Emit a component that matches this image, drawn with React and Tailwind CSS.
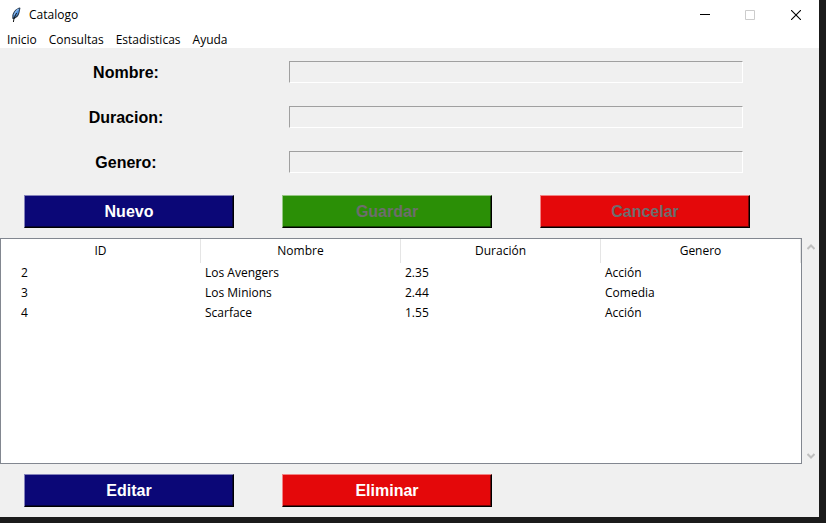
import React from "react";

const menus = ["Inicio", "Consultas", "Estadisticas", "Ayuda"];

const fields = [
  { id: "nombre", label: "Nombre:" },
  { id: "duracion", label: "Duracion:" },
  { id: "genero", label: "Genero:" },
];

const columns = ["ID", "Nombre", "Duración", "Genero"];

const movies = [
  { id: 2, nombre: "Los Avengers", duracion: "2.35", genero: "Acción" },
  { id: 3, nombre: "Los Minions", duracion: "2.44", genero: "Comedia" },
  { id: 4, nombre: "Scarface", duracion: "1.55", genero: "Acción" },
];

const buttonColors = {
  blue: "bg-[#0b0777] border-t-[#8583bb] border-l-[#8583bb] shadow-[inset_-1px_-1px_0_#06043c]",
  green: "bg-[#2b8f06] border-t-[#95c782] border-l-[#95c782] shadow-[inset_-1px_-1px_0_#154703]",
  red: "bg-[#e4080a] border-t-[#f28485] border-l-[#f28485] shadow-[inset_-1px_-1px_0_#720405]",
};

const FeatherIcon = () => (
  <svg className="h-4 w-4" viewBox="0 0 16 16" aria-hidden="true">
    <path d="M12 0.4 C8.6 1 5.2 4.2 4.4 8 L4.2 11.4 L5.6 12.2 C8.8 11 10.8 8.8 11.4 6 L12.4 1.2 Z" fill="#2a3a4c" />
    <path d="M11.4 1.4 C8.6 2.4 6 5.2 5.4 8.2 L5.4 10.6 C8.2 9.8 10 7.6 10.6 5.2 Z" fill="#4f8fd8" />
    <path d="M10.6 2 C8.6 3.2 7 5.4 6.2 8" fill="none" stroke="#8fbcf0" strokeWidth="1.2" />
    <path d="M8.6 6 C7.2 8.4 5.8 11 5.4 15" fill="none" stroke="#111" strokeWidth="1" />
  </svg>
);

const TitleBar = () => (
  <header className="flex h-[30px] items-center bg-white pl-2">
    <FeatherIcon />
    <h1 className="flex-1 pl-[5px] text-[12px] leading-4">Catalogo</h1>
    <button type="button" aria-label="Minimizar" className="flex h-7 w-[44px] items-center justify-center">
      <svg width="10" height="10" viewBox="0 0 10 10">
        <path d="M0 4.5H10" stroke="#000" />
      </svg>
    </button>
    <button type="button" aria-label="Maximizar" disabled className="flex h-7 w-[46px] items-center justify-center">
      <svg width="10" height="10" viewBox="0 0 10 10">
        <path d="M0.5 0.5H9.5V9.5H0.5Z" fill="none" stroke="#ccc" />
      </svg>
    </button>
    <button type="button" aria-label="Cerrar" className="flex h-7 w-[46px] items-center justify-center">
      <svg width="10" height="10" viewBox="0 0 10 10">
        <path d="M0 0L10 10M10 0L0 10" stroke="#000" strokeWidth="1.1" />
      </svg>
    </button>
  </header>
);

const MenuBar = () => (
  <nav className="flex h-[18px] items-end bg-white pl-px">
    {menus.map((menu) => (
      <button key={menu} type="button" className="px-[6px] text-[12px] leading-4">
        {menu}
      </button>
    ))}
  </nav>
);

const Field = ({ id, label }) => (
  <div className="grid h-[45px] grid-cols-3 items-center">
    <label htmlFor={id} className="pr-[6px] text-center font-['Liberation_Sans',Arial,sans-serif] text-[16px] leading-5 font-bold">
      {label}
    </label>
    <div className="col-span-2 px-[31px] pb-px">
      <input
        id={id}
        type="text"
        disabled
        className="block h-[22px] w-full border border-t-[#a0a0a0] border-r-white border-b-white border-l-[#a0a0a0] bg-[#f0f0f0] px-1"
      />
    </div>
  </div>
);

const ActionButton = ({ color, disabled, children }) => (
  <div className="px-6 py-[10px]">
    <button
      type="button"
      disabled={disabled}
      className={`block h-[33px] w-full border border-r-black border-b-black font-['Liberation_Sans',Arial,sans-serif] text-[16px] leading-5 font-bold text-white disabled:text-[#6d6d6d] ${buttonColors[color]}`}
    >
      {children}
    </button>
  </div>
);

const Arrow = ({ label, path }) => (
  <button type="button" aria-label={label} className="flex h-[17px] w-full items-center justify-center">
    <svg width="8" height="6" viewBox="0 0 8 6">
      <path d={path} fill="none" stroke="#bfbfbf" strokeWidth="2" />
    </svg>
  </button>
);

const MovieTable = () => (
  <div className="flex h-[226px]">
    <div className="flex-1 border border-[#828790] bg-white">
      <table className="w-full table-fixed border-separate border-spacing-0 text-[12px] leading-4">
        <thead>
          <tr className="h-6">
            {columns.map((column) => (
              <th key={column} scope="col" className="border-r border-[#e5e5e5] p-0 text-center font-normal">
                {column}
              </th>
            ))}
          </tr>
        </thead>
        <tbody>
          {movies.map((movie) => (
            <tr key={movie.id} className="h-5">
              <td className="p-0 pl-5">{movie.id}</td>
              <td className="p-0 pl-1">{movie.nombre}</td>
              <td className="p-0 pl-1">{movie.duracion}</td>
              <td className="p-0 pl-1">{movie.genero}</td>
            </tr>
          ))}
        </tbody>
      </table>
    </div>
    <div className="flex w-[17px] flex-col justify-between">
      <Arrow label="Subir" path="M0.5 5L4 1.5L7.5 5" />
      <Arrow label="Bajar" path="M0.5 1L4 4.5L7.5 1" />
    </div>
  </div>
);

const App = () => {
  return (
    <div className="min-h-screen bg-[#1b1b1b] pr-[7px] pb-[6px] font-['Open_Sans','Segoe_UI',sans-serif] text-black">
      <div className="bg-[#f0f0f0]">
        <TitleBar />
        <MenuBar />
        <main>
          <form className="max-w-[774px] pt-[2px]">
            {fields.map((field) => (
              <Field key={field.id} id={field.id} label={field.label} />
            ))}
            <div className="grid grid-cols-3">
              <ActionButton color="blue">Nuevo</ActionButton>
              <ActionButton color="green" disabled>Guardar</ActionButton>
              <ActionButton color="red" disabled>Cancelar</ActionButton>
            </div>
          </form>
          <MovieTable />
          <div className="grid max-w-[774px] grid-cols-3">
            <ActionButton color="blue">Editar</ActionButton>
            <ActionButton color="red">Eliminar</ActionButton>
          </div>
        </main>
      </div>
    </div>
  );
};

export default App;
